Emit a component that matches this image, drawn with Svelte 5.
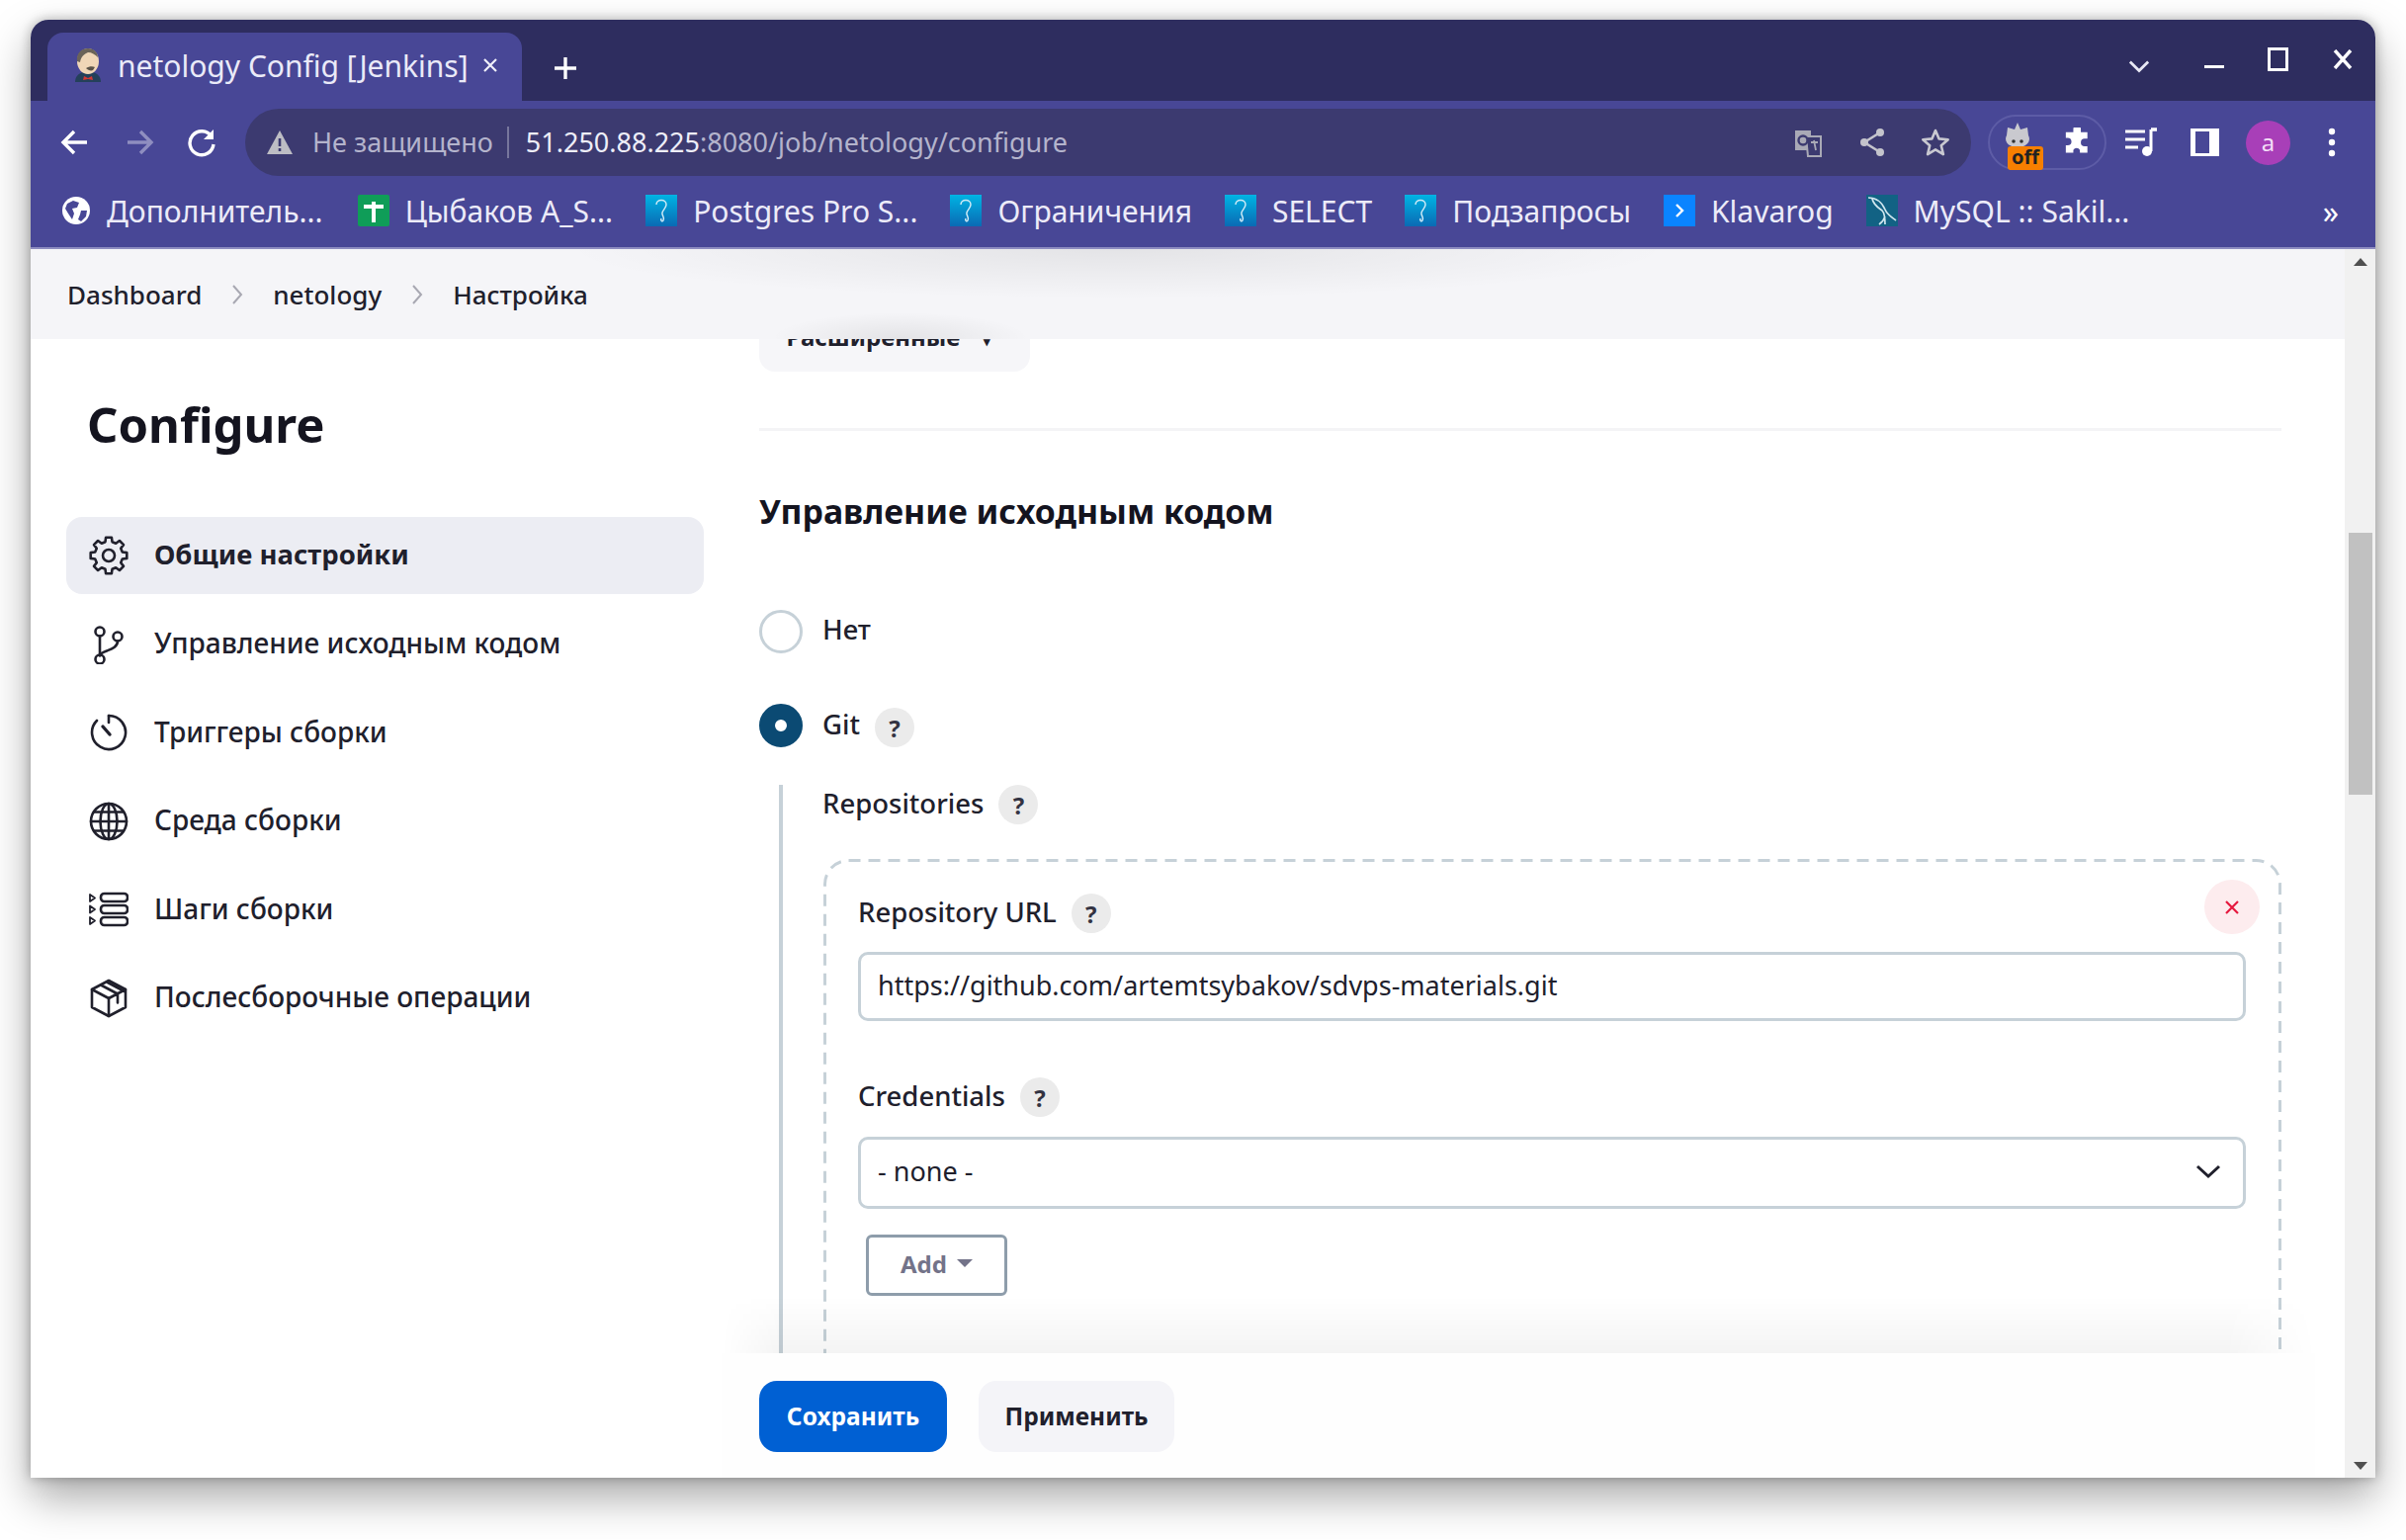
<script>
  // sidebar sections of the job config page
  const sections = [
    { label: "Общие настройки", icon: "gear", active: true },
    { label: "Управление исходным кодом", icon: "branch" },
    { label: "Триггеры сборки", icon: "timer" },
    { label: "Среда сборки", icon: "globe" },
    { label: "Шаги сборки", icon: "steps" },
    { label: "Послесборочные операции", icon: "box" },
  ];

  const bookmarks = [
    { label: "Дополнитель...", icon: "world" },
    { label: "Цыбаков A_S...", icon: "sheet" },
    { label: "Postgres Pro S...", icon: "pg" },
    { label: "Ограничения", icon: "pg" },
    { label: "SELECT", icon: "pg" },
    { label: "Подзапросы", icon: "pg" },
    { label: "Klavarog", icon: "klava" },
    { label: "MySQL :: Sakil...", icon: "mysql" },
  ];

  // 8 tooth gear outline, centre 20,20
  function gearPath() {
    let d = "";
    const teeth = 8;
    for (let i = 0; i < teeth; i++) {
      const a = (i / teeth) * Math.PI * 2 - Math.PI / 2;
      const step = (Math.PI * 2) / teeth;
      const pts = [
        [a - step * 0.2, 18.5],
        [a + step * 0.2, 18.5],
        [a + step * 0.32, 14.2],
        [a + step * 0.68, 14.2],
      ];
      for (const [ang, r] of pts) {
        const x = (20 + Math.cos(ang) * r).toFixed(1);
        const y = (20 + Math.sin(ang) * r).toFixed(1);
        d += (d ? "L" : "M") + x + " " + y;
      }
    }
    return d + "Z";
  }
  const gear = gearPath();
</script>

<div class="desktop">
<div class="window">
  <header class="titlebar">
    <div class="tab">
      <svg class="favicon" viewBox="0 0 32 36" width="32" height="36">
        <path d="M3 35c0-6 4-9 8-10h10c4 1 8 4 8 10z" fill="#24405a" />
        <path d="M12 29l4 2 4-2 1 4-5-1-5 1z" fill="#d33833" />
        <ellipse cx="16" cy="14" rx="11" ry="13" fill="#f0d6b7" />
        <path d="M5 14C4 5 10 1 16 1s10 4 10 9c-3-3-6-5-10-5C12 7 9 9 8 15z" fill="#6b6358" />
        <path d="M14 21c3-2 7-2 9-1l-2 3c-2 1-5 0-7-2z" fill="#5b5348" />
      </svg>
      <span class="tab-title">netology Config [Jenkins]</span>
      <svg class="tab-close" viewBox="0 0 16 16" width="16" height="16"><path d="M2 2l12 12M14 2L2 14" stroke="#f0f0fa" stroke-width="2.2" /></svg>
    </div>
    <svg class="plus" viewBox="0 0 24 24" width="24" height="24"><path d="M12 1v22M1 12h22" stroke="#fff" stroke-width="3.4" /></svg>
    <div class="wincontrols">
      <svg viewBox="0 0 24 14" width="22" height="14" class="c1"><path d="M2 2l10 10L22 2" stroke="#e8e8f4" stroke-width="3" fill="none" /></svg>
      <span class="min"></span>
      <span class="max"></span>
      <svg viewBox="0 0 20 20" width="20" height="20" class="c4"><path d="M2 1l16 18M18 1L2 19" stroke="#fff" stroke-width="3.4" /></svg>
    </div>
  </header>

  <div class="toolbar">
    <div class="navrow">
      <svg class="nav n1" viewBox="0 0 32 32" width="32" height="32"><path d="M28 16H5M15 5L4 16l11 11" stroke="#fff" stroke-width="3.4" fill="none" /></svg>
      <svg class="nav n2" viewBox="0 0 32 32" width="32" height="32"><path d="M4 16h23M17 5l11 11-11 11" stroke="#8f8ec0" stroke-width="3.4" fill="none" /></svg>
      <svg class="nav n3" viewBox="0 0 32 32" width="32" height="32"><path d="M26 10a12 12 0 1 0 2 8" stroke="#fff" stroke-width="3.4" fill="none" /><path d="M28 3v10H18z" fill="#fff" /></svg>
      <div class="omnibox">
        <svg viewBox="0 0 28 26" width="28" height="26"><path d="M14 1l13 24H1z" fill="#bdbdc4" /><path d="M14 9v8M14 19v3" stroke="#3c3a70" stroke-width="2.6" /></svg>
        <span class="insecure">Не защищено</span>
        <span class="sep"></span>
        <span class="url"><b>51.250.88.225</b>:8080/job/netology/configure</span>
        <div class="omni-icons">
          <svg viewBox="0 0 30 30" width="30" height="30"><path d="M2 3h16v20H2z" fill="#a9a9b6" /><path d="M13 9h15v20H15z" fill="#3c3a70" stroke="#a9a9b6" stroke-width="2" /><circle cx="10" cy="13" r="4.5" fill="none" stroke="#3c3a70" stroke-width="2.4" /><path d="M18 15h7M21 13l2 10" stroke="#a9a9b6" stroke-width="1.8" /></svg>
          <svg viewBox="0 0 30 30" width="30" height="30"><path d="M23 5L7 15l16 10" stroke="#c4c4cc" stroke-width="2.6" fill="none" /><circle cx="23" cy="5" r="4" fill="#c4c4cc" /><circle cx="7" cy="15" r="4" fill="#c4c4cc" /><circle cx="23" cy="25" r="4" fill="#c4c4cc" /></svg>
          <svg viewBox="0 0 30 30" width="30" height="30"><path d="M15 3l3.6 8.4 9.1.8-6.9 6 2.1 8.9L15 22.4l-7.9 4.7 2.1-8.9-6.9-6 9.1-.8z" stroke="#c8c8d0" stroke-width="2.6" fill="none" stroke-linejoin="round" /></svg>
        </div>
      </div>
      <div class="extpill">
        <span class="noscript">
          <svg viewBox="0 0 30 26" width="30" height="26"><path d="M15 0l3 7 7-2 1 8c3 5-1 12-11 12S1 18 4 13l1-8 7 2z" fill="#c9c9cf" /><circle cx="11" cy="19" r="1.800" fill="#333" /><circle cx="19" cy="19" r="1.800" fill="#333" /></svg>
          <span class="off">off</span>
        </span>
        <svg viewBox="0 0 30 30" width="30" height="30"><path d="M11 3a4 4 0 0 1 8 0v3h7v7h-3a4 4 0 0 0 0 8h3v7h-8v-3a4 4 0 0 0-7 0v3H3v-8h2a4 4 0 0 0 0-8H3V6h8z" fill="#fff" transform="translate(1 -1) scale(.95)" /></svg>
      </div>
      <svg class="tool" viewBox="0 0 34 32" width="34" height="32"><path d="M1 5h20M1 13h20M1 21h13" stroke="#fff" stroke-width="3.2" /><path d="M27 3v22" stroke="#fff" stroke-width="3" /><path d="M27 3h6" stroke="#fff" stroke-width="3.4" /><circle cx="23" cy="25" r="5" fill="#fff" /></svg>
      <span class="sidepanel"></span>
      <span class="avatar">a</span>
      <svg class="dots" viewBox="0 0 8 30" width="8" height="30"><circle cx="4" cy="4" r="3.2" fill="#fff" /><circle cx="4" cy="15" r="3.2" fill="#fff" /><circle cx="4" cy="26" r="3.2" fill="#fff" /></svg>
    </div>

    <nav class="bookmarks">
      {#each bookmarks as b}
        <div class="bookmark">
          {#if b.icon === "world"}
            <svg viewBox="0 0 30 30" width="30" height="30"><circle cx="15" cy="15" r="14" fill="#fff" /><path d="M6 8l6-3 6 2-2 5-5 1 2 5-2 6-4-6-3-5zM20 15h6l-1 6-5 5-3-2 2-5z" fill="#484796" /></svg>
          {:else if b.icon === "sheet"}
            <svg viewBox="0 0 32 32" width="32" height="32"><rect width="32" height="32" rx="2" fill="#0f9d58" /><path d="M6 12h20M16 7v21" stroke="#fff" stroke-width="4" /></svg>
          {:else if b.icon === "pg"}
            <svg viewBox="0 0 32 32" width="32" height="32"><defs><linearGradient id="pgfill" x1="0" y1="0" x2="0" y2="1"><stop offset="0" stop-color="#00b4e4" /><stop offset="1" stop-color="#0a6ab4" /></linearGradient></defs><rect width="32" height="32" fill="url(#pgfill)" /><path d="M11 10c0-6 10-6 10 0 0 3-3 5-4 8s3 5 1 8c-1 2-3 0-2-2" stroke="#cfeaf6" stroke-width="1.5" fill="none" /></svg>
          {:else if b.icon === "klava"}
            <svg viewBox="0 0 32 32" width="32" height="32"><rect width="32" height="32" fill="#0a84ff" /><path d="M13 10l6 6-6 6" stroke="#fff" stroke-width="2.4" fill="none" /></svg>
          {:else}
            <svg viewBox="0 0 32 32" width="32" height="32"><rect width="32" height="32" fill="#126284" /><path d="M2 3c8 0 14 5 17 12 2 5 7 8 11 11M6 4c1 6 6 9 10 12 3 3 3 8 3 14M19 22c-1 3-3 6-6 8" stroke="#cfe6ee" stroke-width="1.7" fill="none" /></svg>
          {/if}
          <span>{b.label}</span>
        </div>
      {/each}
      <span class="more">»</span>
    </nav>
  </div>

  <div class="page">
    <div class="content">
      <div class="breadcrumbs">
        <span>Dashboard</span>
        <svg viewBox="0 0 12 22" width="12" height="22"><path d="M2 2l8 9-8 9" stroke="#a8a8b2" stroke-width="2" fill="none" /></svg>
        <span>netology</span>
        <svg viewBox="0 0 12 22" width="12" height="22"><path d="M2 2l8 9-8 9" stroke="#a8a8b2" stroke-width="2" fill="none" /></svg>
        <span>Настройка</span>
      </div>

      <div class="columns">
        <aside class="sidebar">
          <h1>Configure</h1>
          <ul>
            {#each sections as s}
              <li class:active={s.active}>
                <svg viewBox="0 0 40 40" width="40" height="40" fill="none" stroke="#20202c" stroke-width="2.6" stroke-linejoin="round" stroke-linecap="round">
                  {#if s.icon === "gear"}
                    <path d={gear} /><circle cx="20" cy="20" r="6" />
                  {:else if s.icon === "branch"}
                    <circle cx="11" cy="7" r="4.5" /><circle cx="29" cy="12" r="4.5" /><circle cx="11" cy="35" r="4.5" />
                    <path d="M11 11.500v19M29 16.500c0 6-6 8-11 10-4 1.500-7 3-7 5" />
                  {:else if s.icon === "timer"}
                    <path d="M20 3a17 17 0 1 1-12 5" /><path d="M20 3v7" /><path d="M14 14l7 8" stroke-width="3.4" />
                  {:else if s.icon === "globe"}
                    <circle cx="20" cy="20" r="18" /><ellipse cx="20" cy="20" rx="8.500" ry="18" /><path d="M20 2v36M2 20h36M5 10.500h30M5 29.500h30" />
                  {:else if s.icon === "steps"}
                    <path d="M1 5l5 3.500-5 3.500zM1 16.500l5 3.500-5 3.500zM1 28l5 3.500-5 3.500z" stroke-width="1.8" />
                    <rect x="12" y="4" width="27" height="8" rx="3.500" /><rect x="12" y="16" width="27" height="8" rx="3.500" /><rect x="12" y="28" width="27" height="8" rx="3.500" />
                  {:else}
                    <path d="M20 2l17 9v18l-17 9-17-9V11z" /><path d="M3 11l17 9 17-9M20 20v18M12 6.500l17 9v9M19 4l17 9" />
                  {/if}
                </svg>
                <span>{s.label}</span>
              </li>
            {/each}
          </ul>
        </aside>

        <main class="main">
          <div class="scroll">
            <button class="advanced">Расширенные <i>▾</i></button>
            <hr />
            <h2>Управление исходным кодом</h2>

            <div class="radio-row first">
              <span class="radio"></span>
              <span class="label">Нет</span>
            </div>
            <div class="radio-row second">
              <span class="radio checked"></span>
              <span class="label">Git</span>
              <span class="help">?</span>
            </div>

            <div class="nested">
              <div class="label-row top">
                <span class="label">Repositories</span>
                <span class="help">?</span>
              </div>

              <div class="repo">
                <svg class="dashes"><rect x="1.5" y="1.5" rx="24" /></svg>
                <span class="remove"><svg viewBox="0 0 16 16" width="16" height="16"><path d="M2 2l12 12M14 2L2 14" stroke="#e6193f" stroke-width="2.2" /></svg></span>
                <div class="label-row">
                  <span class="label">Repository URL</span>
                  <span class="help">?</span>
                </div>
                <div class="input">https://github.com/artemtsybakov/sdvps-materials.git</div>
                <div class="label-row cred">
                  <span class="label">Credentials</span>
                  <span class="help">?</span>
                </div>
                <div class="input select">
                  <span>- none -</span>
                  <svg viewBox="0 0 26 16" width="26" height="16"><path d="M2 3l11 10L24 3" stroke="#20202c" stroke-width="3" fill="none" /></svg>
                </div>
                <button class="add">Add <i></i></button>
              </div>
            </div>
          </div>
          <div class="actions">
            <button class="save">Сохранить</button>
            <button class="apply">Применить</button>
          </div>
        </main>
      </div>
    </div>

    <div class="scrollbar">
      <i class="up"></i>
      <span class="thumb"></span>
      <i class="down"></i>
    </div>
  </div>
</div>
</div>

<style>
  :global(body) {
    margin: 0;
    background: #fff;
    font-family: "Noto Sans", "Open Sans", sans-serif;
  }

  .desktop {
    height: 1558px;
    box-sizing: border-box;
    padding: 20px 0 0 31px;
    overflow: hidden;
  }
  .window {
    width: 2372px;
    height: 1475px;
    display: flex;
    flex-direction: column;
    border-radius: 18px 18px 0 0;
    overflow: hidden;
    box-shadow: 0 20px 44px rgba(0, 0, 0, 0.34), 0 0 12px rgba(0, 0, 0, 0.28);
    background: #fff;
  }

  /* browser chrome */
  .titlebar {
    height: 82px;
    flex: none;
    display: flex;
    align-items: flex-end;
    background: #2e2d5f;
    padding-left: 17px;
    box-sizing: border-box;
  }
  .tab {
    width: 480px;
    height: 69px;
    box-sizing: border-box;
    background: #484796;
    border-radius: 16px 16px 0 0;
    display: flex;
    align-items: center;
    padding: 0 24px 3px 25px;
    color: #eaeaf8;
  }
  .favicon {
    flex: none;
    margin-right: 14px;
  }
  .tab-title {
    font-size: 30px;
    flex: 1;
    white-space: nowrap;
  }
  .plus {
    margin: 0 0 21px 32px;
  }
  .wincontrols {
    margin-left: auto;
    display: flex;
    align-items: center;
    align-self: flex-start;
    padding: 0;
    height: 82px;
  }
  .c1 {
    margin-right: 55px;
    margin-top: 12px;
  }
  .min {
    width: 20px;
    height: 3px;
    background: #fff;
    margin-right: 44px;
    margin-top: 13px;
  }
  .max {
    width: 15px;
    height: 18px;
    border: 3px solid #fff;
    margin-right: 45px;
    margin-top: -2px;
  }
  .c4 {
    margin-right: 23px;
    margin-top: -2px;
  }

  .toolbar {
    height: 150px;
    flex: none;
    box-sizing: border-box;
    background: #484796;
    border-bottom: 2px solid #8d8cc0;
    padding-top: 8px;
    display: flex;
    flex-direction: column;
  }
  .navrow {
    height: 68px;
    display: flex;
    align-items: center;
    flex: none;
  }
  .n1 { margin-left: 29px; }
  .n2 { margin-left: 33px; }
  .n3 { margin-left: 31px; }
  .omnibox {
    width: 1746px;
    height: 68px;
    margin-left: 28px;
    flex: none;
    box-sizing: border-box;
    border-radius: 34px;
    background: #3c3a70;
    display: flex;
    align-items: center;
    padding: 0 21px 0 21px;
    font-size: 27px;
    color: #b4b4cc;
  }
  .insecure {
    margin-left: 19px;
    margin-top: -2px;
  }
  .url {
    margin-top: -2px;
  }
  .sep {
    width: 2px;
    height: 32px;
    background: #77769c;
    margin: 0 17px 0 14px;
  }
  .url b {
    font-weight: 400;
    color: #eeeef8;
  }
  .omni-icons {
    margin-left: auto;
    display: flex;
    gap: 34px;
  }
  .omni-icons svg:first-child {
    margin-right: 1px;
  }
  .extpill {
    width: 120px;
    height: 56px;
    box-sizing: border-box;
    margin-left: 17px;
    border: 2px solid #5d5ca6;
    border-radius: 28px;
    display: flex;
    align-items: center;
    padding-left: 13px;
    gap: 30px;
  }
  .noscript {
    position: relative;
    width: 30px;
    height: 26px;
    margin-top: -14px;
  }
  .off {
    position: absolute;
    left: 5px;
    top: 24px;
    width: 36px;
    height: 24px;
    border-radius: 3px;
    background: #f77f00;
    color: #222;
    font-size: 20px;
    line-height: 21px;
    font-weight: 700;
    text-align: center;
  }
  .tool {
    margin-left: 18px;
  }
  .sidepanel {
    width: 14px;
    height: 22px;
    border: solid #fff;
    border-width: 3px 10px 3px 5px;
    margin-left: 33px;
  }
  .avatar {
    width: 45px;
    height: 45px;
    border-radius: 50%;
    margin-left: 27px;
    background: #a83fb8;
    color: #f3ddf6;
    font-size: 24px;
    padding-bottom: 2px;
    box-sizing: border-box;
    display: flex;
    align-items: center;
    justify-content: center;
  }
  .dots {
    margin-left: 38px;
  }

  .bookmarks {
    flex: 1;
    display: flex;
    align-items: center;
    padding: 0 0 2px 31px;
    color: #ecebf8;
    font-size: 30px;
  }
  .bookmark {
    display: flex;
    align-items: center;
    gap: 16px;
    margin-right: 33px;
    white-space: nowrap;
  }
  .bookmark:first-child {
    margin-right: 35px;
  }
  .more {
    margin-left: auto;
    margin-right: 37px;
    font-size: 32px;
    color: #fff;
  }

  /* jenkins page */
  .page {
    flex: 1;
    min-height: 0;
    display: flex;
  }
  .content {
    flex: 1;
    min-width: 0;
    display: flex;
    flex-direction: column;
  }
  .breadcrumbs {
    height: 91px;
    flex: none;
    position: relative;
    z-index: 2;
    background:
      radial-gradient(ellipse 130px 26px at 880px 90px, rgba(0, 0, 0, 0.07), transparent),
      radial-gradient(ellipse 560px 50px at 1100px 0, rgba(0, 0, 0, 0.07), transparent),
      #f5f5f8;
    display: flex;
    align-items: center;
    gap: 30px;
    padding-left: 37px;
    font-size: 26px;
    font-weight: 500;
    color: #20202c;
  }
  .columns {
    flex: 1;
    min-height: 0;
    display: flex;
  }
  .sidebar {
    width: 699px;
    flex: none;
    box-sizing: border-box;
    padding: 53px 0 0 36px;
  }
  h1 {
    margin: 0 0 61px 21px;
    font-size: 49px;
    line-height: 66px;
    font-weight: 700;
    color: #14141f;
  }
  ul {
    list-style: none;
    margin: 0;
    padding: 0;
    width: 645px;
  }
  li {
    height: 78px;
    margin-bottom: 11.500px;
    display: flex;
    align-items: center;
    gap: 27px;
    padding-left: 23px;
    border-radius: 16px;
    font-size: 28px;
    font-weight: 500;
    color: #20202c;
  }
  li span {
    margin: -3px 0 0 -1px;
  }
  li.active {
    background: #ecedf3;
    font-size: 27.500px;
    font-weight: 700;
  }

  .main {
    flex: 1;
    min-width: 0;
    display: flex;
    flex-direction: column;
  }
  .scroll {
    flex: 1;
    min-height: 0;
    overflow: hidden;
    padding: 0 64px 0 38px;
  }
  .advanced {
    display: block;
    width: 274px;
    height: 72px;
    margin: -39px 0 0;
    border: none;
    border-radius: 16px;
    background: #f6f6f9;
    font: 700 24px "Noto Sans", sans-serif;
    color: #20202c;
    padding-right: 18px;
  }
  .advanced i {
    font-style: normal;
    font-size: 13px;
    margin-left: 18px;
  }
  hr {
    margin: 57px 0 0;
    height: 3px;
    border: none;
    background: #f4f4f6;
  }
  h2 {
    margin: 61px 0 0;
    font-size: 33.800px;
    line-height: 40px;
    font-weight: 700;
    color: #14141f;
  }
  .radio-row {
    display: flex;
    align-items: center;
    height: 44px;
    color: #20202c;
  }
  .radio-row.first {
    margin-top: 80px;
  }
  .radio-row.first .label {
    margin-top: -5px;
  }
  .radio-row.second {
    margin-top: 51px;
  }
  .radio {
    width: 44px;
    height: 44px;
    box-sizing: border-box;
    border-radius: 50%;
    border: 3px solid #c6d1d8;
    margin-right: 20px;
  }
  .radio.checked {
    border: 16px solid #0b4a73;
    background: #fff;
  }
  .label {
    font-size: 27.500px;
    font-weight: 500;
    margin-top: -3px;
    color: #20202c;
    white-space: nowrap;
  }
  .help {
    width: 40px;
    height: 40px;
    border-radius: 50%;
    background: #ebebeb;
    color: #333342;
    font-size: 24px;
    font-weight: 700;
    display: flex;
    align-items: center;
    justify-content: center;
    margin-left: 15px;
    flex: none;
  }
  .radio-row.second .help {
    margin-top: 4px;
  }
  .nested {
    margin: 38px 0 0 20px;
    border-left: 4px solid #c6d1d8;
    padding-left: 41px;
  }
  .label-row {
    display: flex;
    align-items: center;
    height: 40px;
  }
  .label-row.top {
    margin-left: -1px;
  }
  .repo {
    position: relative;
    margin-top: 35px;
    box-sizing: border-box;
    padding: 35px 36px 120px 35px;
  }
  .dashes {
    position: absolute;
    inset: 0;
    width: 100%;
    height: 100%;
    fill: none;
    stroke: #c6d1d8;
    stroke-width: 3;
    stroke-dasharray: 12 8;
    pointer-events: none;
  }
  .dashes rect {
    width: calc(100% - 3px);
    height: calc(100% - 3px);
  }
  .remove {
    position: absolute;
    top: 21px;
    right: 22px;
    width: 56px;
    height: 55px;
    border-radius: 50%;
    background: #fdecee;
    display: flex;
    align-items: center;
    justify-content: center;
  }
  .input {
    margin-top: 19px;
    height: 70px;
    box-sizing: border-box;
    border: 3px solid #c6d1d8;
    border-radius: 10px;
    display: flex;
    align-items: center;
    padding: 0 17px 4px;
    font-size: 27px;
    color: #20202c;
    background: #fff;
  }
  .cred {
    margin-top: 57px;
  }
  .select {
    margin-top: 20px;
    height: 73px;
    justify-content: space-between;
    padding-right: 22px;
  }
  .add {
    display: flex;
    align-items: center;
    justify-content: center;
    gap: 10px;
    width: 143px;
    height: 62px;
    margin: 26px 0 0 8px;
    padding-bottom: 5px;
    border: 3px solid #8e9dab;
    border-radius: 6px;
    background: #fff;
    font: 700 24px "Noto Sans", sans-serif;
    color: #737389;
  }
  .add i {
    border: 8px solid transparent;
    border-top-color: #737389;
    border-bottom: none;
  }
  .actions {
    position: relative;
    z-index: 2;
    height: 126px;
    flex: none;
    box-sizing: border-box;
    background: #fefefe;
    margin-right: 30px;
    display: flex;
    align-items: flex-start;
    gap: 32px;
    padding: 28px 0 0 38px;
  }
  /* soft fade over the scrolled content */
  .actions::before {
    content: "";
    position: absolute;
    left: 0;
    right: 0;
    top: -58px;
    height: 58px;
    background: linear-gradient(to bottom, rgba(0, 0, 0, 0), rgba(0, 0, 0, 0.045));
    mask-image: linear-gradient(to right, transparent, #000 60px, #000 calc(100% - 90px), transparent);
  }
  .actions button {
    height: 72px;
    border: none;
    border-radius: 18px;
    padding-bottom: 3px;
    font: 700 24.500px "Noto Sans", sans-serif;
  }
  .save {
    width: 190px;
    background: #0060d3;
    color: #fff;
  }
  .apply {
    width: 198px;
    background: #f4f4f8;
    color: #20202c;
  }

  .scrollbar {
    width: 31px;
    flex: none;
    background: #f1f1f1;
    position: relative;
  }
  .thumb {
    position: absolute;
    left: 4px;
    right: 3px;
    top: 287px;
    height: 265px;
    background: #c1c1c1;
  }
  .up,
  .down {
    position: absolute;
    left: 9px;
    border: 7px solid transparent;
  }
  .up {
    top: 9px;
    border-bottom: 8px solid #505050;
    border-top: none;
  }
  .down {
    bottom: 8px;
    border-top: 8px solid #505050;
    border-bottom: none;
  }
</style>
